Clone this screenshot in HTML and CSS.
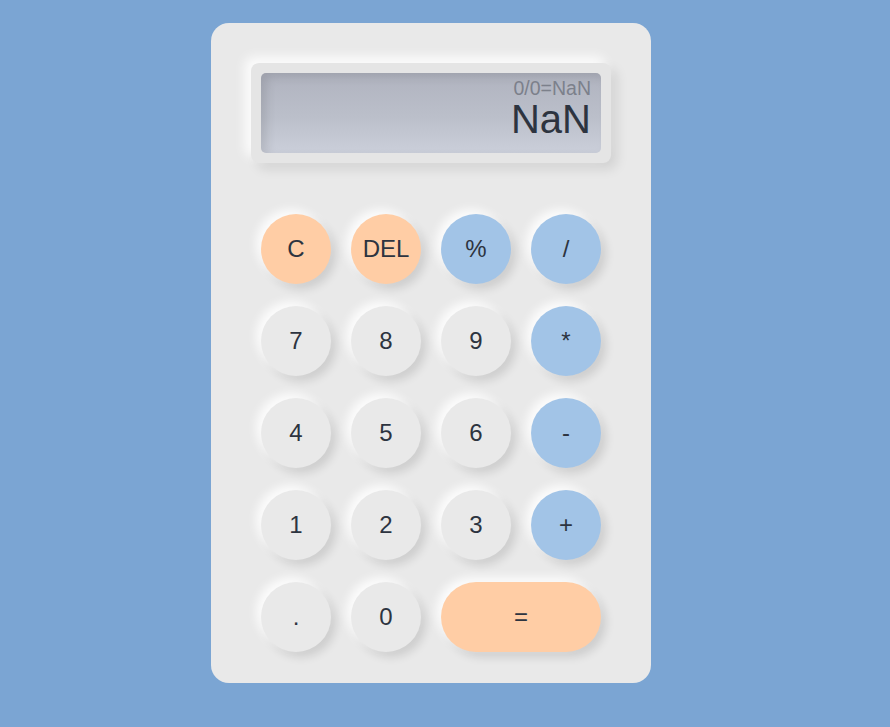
FILE: index.html
```html
<!DOCTYPE html>
<html lang="en">
<head>
<meta charset="utf-8">
<title>Calculator</title>
<link rel="stylesheet" href="styles.css">
</head>
<body>
<div class="calculator">
  <div class="display">
    <div class="screen">
      <div class="history">0/0=NaN</div>
      <div class="result">NaN</div>
    </div>
  </div>
  <div class="keypad">
    <button class="key key-orange">C</button>
    <button class="key key-orange">DEL</button>
    <button class="key key-blue">%</button>
    <button class="key key-blue">/</button>
    <button class="key">7</button>
    <button class="key">8</button>
    <button class="key">9</button>
    <button class="key key-blue">*</button>
    <button class="key">4</button>
    <button class="key">5</button>
    <button class="key">6</button>
    <button class="key key-blue">-</button>
    <button class="key">1</button>
    <button class="key">2</button>
    <button class="key">3</button>
    <button class="key key-blue">+</button>
    <button class="key">.</button>
    <button class="key">0</button>
    <button class="key key-orange key-wide">=</button>
  </div>
</div>
</body>
</html>
```

FILE: styles.css
```css
html, body {
  margin: 0;
  height: 100%;
}
body {
  background: #7ba5d3;
  font-family: "Liberation Sans", Arial, sans-serif;
  padding: 23px 0 0 211px;
  box-sizing: border-box;
}
.calculator {
  width: 440px;
  height: 660px;
  box-sizing: border-box;
  padding: 40px 40px 31px;
  background: #e9e9e9;
  border-radius: 18px;
}
.display {
  width: 360px;
  height: 100px;
  box-sizing: border-box;
  padding: 10px;
  background: #e5e5e5;
  border-radius: 8px;
  box-shadow: -6px -6px 12px rgba(255,255,255,0.9), 6px 6px 12px rgba(0,0,0,0.1);
}
.screen {
  height: 80px;
  box-sizing: border-box;
  border-radius: 5px;
  padding: 5px 10px 0;
  background: linear-gradient(180deg, #b0b3bf 0%, #bbbfca 55%, #cbcfda 100%);
  box-shadow: inset 6px 4px 10px rgba(0,0,0,0.1);
  display: flex;
  flex-direction: column;
  align-items: flex-end;
}
.history {
  font-size: 19.5px;
  line-height: 20px;
  color: #7c808b;
}
.result {
  margin-top: 1px;
  font-size: 40px;
  line-height: 40px;
  color: #2d3440;
}
.keypad {
  margin: 51px 10px 0;
  display: grid;
  grid-template-columns: repeat(4, 70px);
  grid-auto-rows: 70px;
  column-gap: 20px;
  row-gap: 22px;
}
.key {
  border: none;
  margin: 0;
  padding: 0;
  border-radius: 35px;
  background: #e9e9e9;
  color: #2d3440;
  font-family: "Liberation Sans", Arial, sans-serif;
  font-size: 24px;
  box-shadow: -5px -5px 10px rgba(255,255,255,0.85), 5px 5px 10px rgba(0,0,0,0.12);
}
.key-orange {
  background: #ffcda5;
}
.key-blue {
  background: #a2c4e7;
}
.key-wide {
  grid-column: span 2;
}
```
